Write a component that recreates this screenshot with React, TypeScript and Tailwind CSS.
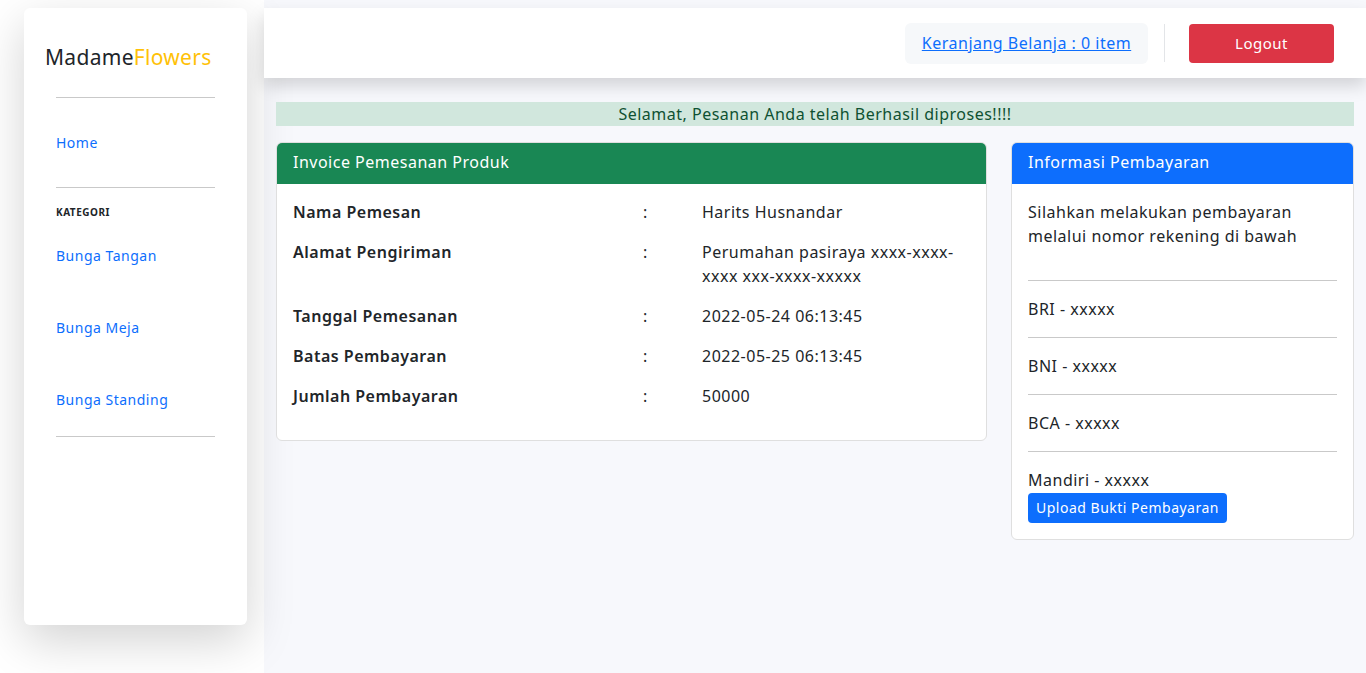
import React from 'react';

// ──────────────────────────────────────────────
// SIDEBAR
// ──────────────────────────────────────────────

const categories = ['Bunga Tangan', 'Bunga Meja', 'Bunga Standing'];

function Sidebar() {
  return (
    <aside className="w-[264px] shrink-0 bg-white pt-2 pl-6 pr-[17px]">
      <div className="h-[617px] rounded-md bg-white shadow-[0_1rem_3rem_rgba(0,0,0,0.175)]">
        <div className="px-[21px] pt-[34px] text-[21px] leading-[30px] tracking-[0.3px] text-[#212529]">
          Madame<span className="text-[#ffc107]">Flowers</span>
        </div>
        <div className="px-8">
          <hr className="mt-[25px] border-t border-[#c9c9c9]" />
          <a href="#" className="mt-[35px] block text-sm leading-5 text-[#0d6efd]">Home</a>
          <hr className="mt-[34px] border-t border-[#c9c9c9]" />
          <div className="mt-4 text-[10px] font-bold leading-4 text-[#212529]">KATEGORI</div>
          <ul className="mt-[26px] flex flex-col gap-[52px]">
            {categories.map((c) => (
              <li key={c}>
                <a href="#" className="block text-sm leading-5 text-[#0d6efd]">{c}</a>
              </li>
            ))}
          </ul>
          <hr className="mt-[26px] border-t border-[#c9c9c9]" />
        </div>
      </div>
    </aside>
  );
}

// ──────────────────────────────────────────────
// TOP BAR
// ──────────────────────────────────────────────

function TopBar() {
  return (
    <header className="mt-2 flex h-[70px] items-center justify-end bg-white pr-8 shadow-[0_0.5rem_1rem_rgba(0,0,0,0.15)]">
      <div className="flex h-[41px] w-[243px] items-center justify-center rounded-md bg-[#f6f8fa]">
        <a href="#" className="text-base text-[#0d6efd] underline">Keranjang Belanja : 0 item</a>
      </div>
      <div className="ml-4 mr-6 h-[38px] w-px bg-[#e3e5e8]" />
      <button className="h-[39px] w-[145px] rounded bg-[#dc3545] text-[15px] text-white">Logout</button>
    </header>
  );
}

// ──────────────────────────────────────────────
// INVOICE CARD
// ──────────────────────────────────────────────

const invoiceRows = [
  { label: 'Nama Pemesan', value: 'Harits Husnandar' },
  { label: 'Alamat Pengiriman', value: 'Perumahan pasiraya xxxx-xxxx-xxxx xxx-xxxx-xxxxx' },
  { label: 'Tanggal Pemesanan', value: '2022-05-24 06:13:45' },
  { label: 'Batas Pembayaran', value: '2022-05-25 06:13:45' },
  { label: 'Jumlah Pembayaran', value: '50000' },
];

function InvoiceCard() {
  return (
    <div className="self-start overflow-hidden rounded-md border border-[#dfdfdf] bg-white">
      <div className="flex h-[41px] items-center bg-[#198754] px-4 pb-[3px] text-base text-white">
        Invoice Pemesanan Produk
      </div>
      <div className="p-4">
        {invoiceRows.map((r) => (
          <div key={r.label} className="mb-4 flex text-base leading-6 text-[#212529]">
            <div className="w-[350px] shrink-0 font-semibold">{r.label}</div>
            <div className="w-[59px] shrink-0">:</div>
            <div className="w-[268px]">{r.value}</div>
          </div>
        ))}
      </div>
    </div>
  );
}

// ──────────────────────────────────────────────
// PAYMENT INFO CARD
// ──────────────────────────────────────────────

const banks = ['BRI - xxxxx', 'BNI - xxxxx', 'BCA - xxxxx'];

function PaymentCard() {
  return (
    <div className="self-start overflow-hidden rounded-md border border-[#dfdfdf] bg-white">
      <div className="flex h-[41px] items-center bg-[#0d6efd] px-4 pb-[3px] text-base text-white">
        Informasi Pembayaran
      </div>
      <div className="p-4 text-base leading-6 text-[#212529]">
        <p className="mb-8">Silahkan melakukan pembayaran melalui nomor rekening di bawah</p>
        {banks.map((b) => (
          <React.Fragment key={b}>
            <hr className="my-4 border-t border-[#c9c9c9]" />
            <p className="mb-4">{b}</p>
          </React.Fragment>
        ))}
        <hr className="my-4 border-t border-[#c9c9c9]" />
        <p>Mandiri - xxxxx</p>
        <button className="mt-px h-[30px] rounded bg-[#0d6efd] px-2 text-sm text-white">
          Upload Bukti Pembayaran
        </button>
      </div>
    </div>
  );
}

// ──────────────────────────────────────────────
// PAGE
// ──────────────────────────────────────────────

export default function App() {
  return (
    <div className="flex min-h-[673px] bg-[#f7f8fc] font-['Noto_Sans',sans-serif] tracking-[0.5px]">
      <Sidebar />
      <main className="flex-1">
        <TopBar />
        <div className="px-3 pt-6">
          <div className="bg-[#d1e7dd] text-center text-base leading-6 text-[#0f5132]">
            Selamat, Pesanan Anda telah Berhasil diproses!!!!
          </div>
          <div className="mt-4 grid grid-cols-[minmax(0,1fr)_343px] gap-6">
            <InvoiceCard />
            <PaymentCard />
          </div>
        </div>
      </main>
    </div>
  );
}
